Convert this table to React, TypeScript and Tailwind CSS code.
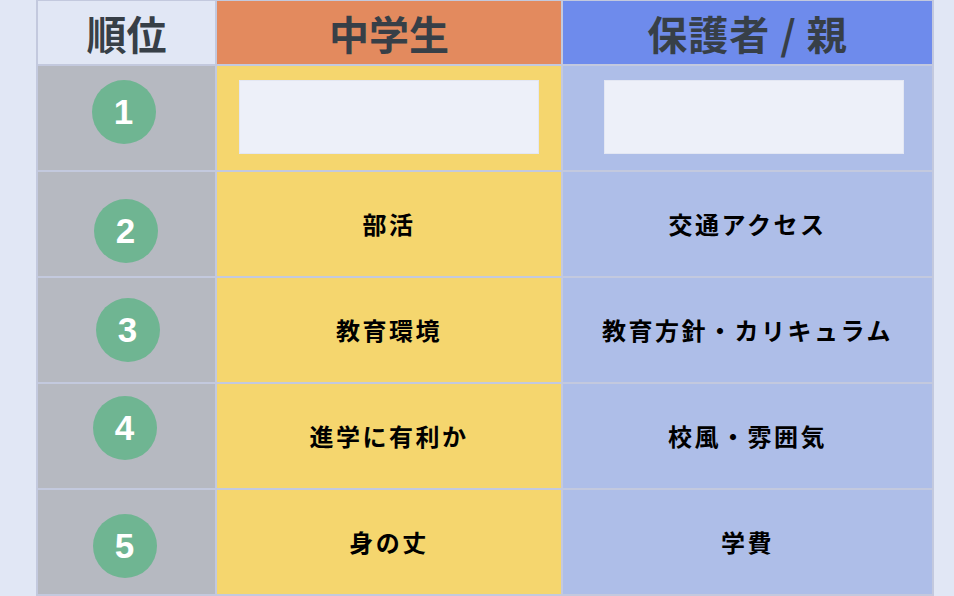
import React from 'react';

interface RankRow {
  rank: number;
  student: string;
  parent: string;
  shift: string;
}

const rows: RankRow[] = [
  { rank: 1, student: '', parent: '', shift: '-translate-x-[3px] -translate-y-[6px]' },
  { rank: 2, student: '部活', parent: '交通アクセス', shift: '-translate-x-[1px] translate-y-[7px]' },
  { rank: 3, student: '教育環境', parent: '教育方針・カリキュラム', shift: 'translate-x-[1px]' },
  { rank: 4, student: '進学に有利か', parent: '校風・雰囲気', shift: '-translate-x-[2px] -translate-y-[8px]' },
  { rank: 5, student: '身の丈', parent: '学費', shift: '-translate-x-[2px] translate-y-[4px]' },
];

const Badge = ({ n, shift }: { n: number; shift: string }) => (
  <div
    className={`w-16 h-16 rounded-full bg-[#6fb592] flex items-center justify-center text-white text-[35px] font-bold ${shift}`}
    style={{ fontFamily: '"Liberation Sans", Arial, sans-serif' }}
  >
    {n}
  </div>
);

const App: React.FC = () => {
  return (
    <div
      className="w-[954px] h-[596px] bg-[#e1e7f5] overflow-hidden pl-[36px]"
      style={{ fontFamily: '"Noto Sans CJK JP", "Noto Sans", sans-serif' }}
    >
      <div className="w-[898px] grid grid-cols-[177px_344px_369px] grid-rows-[63px_repeat(5,104px)] gap-[2px] bg-[#c3c9de] pt-px px-[2px] pb-[2px]">
        <div className="bg-[#e1e7f5] flex items-center justify-center text-[40px] font-bold text-[#373f47]">順位</div>
        <div className="bg-[#e38a5e] flex items-center justify-center text-[40px] font-bold text-[#373f47]">中学生</div>
        <div className="bg-[#6e8bec] flex items-center justify-center text-[40px] font-bold text-[#373f47] tracking-[1px]">保護者 / 親</div>

        {rows.map((r) => (
          <React.Fragment key={r.rank}>
            <div className="bg-[#b6b9c1] flex items-center justify-center">
              <Badge n={r.rank} shift={r.shift} />
            </div>
            {r.rank === 1 ? (
              <>
                <div className="bg-[#f5d66e] pt-[14px] pl-[22px]">
                  <div className="w-[300px] h-[74px] bg-[#edf0f9] border border-[#e3e7f3]" />
                </div>
                <div className="bg-[#aebee8] pt-[14px] pl-[41px]">
                  <div className="w-[300px] h-[74px] bg-[#edf0f9] border border-[#e3e7f3]" />
                </div>
              </>
            ) : (
              <>
                <div className="bg-[#f5d66e] flex items-center justify-center text-[24px] font-bold text-black tracking-[2.5px]">
                  {r.student}
                </div>
                <div className="bg-[#aebee8] flex items-center justify-center text-[24px] font-bold text-black tracking-[2.5px]">
                  {r.parent}
                </div>
              </>
            )}
          </React.Fragment>
        ))}
      </div>
    </div>
  );
};

export default App;
